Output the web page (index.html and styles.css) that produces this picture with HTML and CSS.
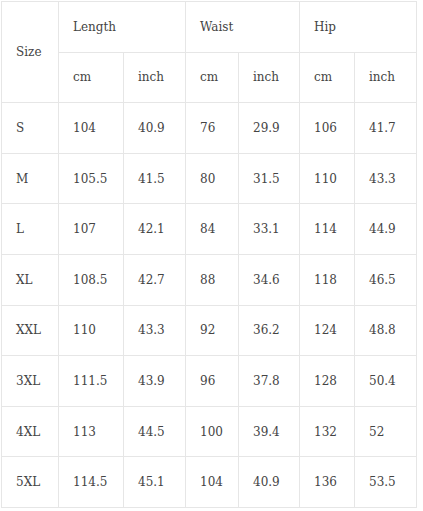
FILE: index.html
```html
<!DOCTYPE html>
<html>
<head>
<meta charset="utf-8">
<link rel="stylesheet" href="styles.css">
</head>
<body>
<table class="size-table">
  <colgroup>
    <col class="c1"><col class="c2"><col class="c3"><col class="c4"><col class="c5"><col class="c6"><col class="c7">
  </colgroup>
  <thead>
    <tr><td rowspan="2">Size</td><td colspan="2">Length</td><td colspan="2">Waist</td><td colspan="2">Hip</td></tr>
    <tr><td>cm</td><td>inch</td><td>cm</td><td>inch</td><td>cm</td><td>inch</td></tr>
  </thead>
  <tbody>
    <tr><td>S</td><td>104</td><td>40.9</td><td>76</td><td>29.9</td><td>106</td><td>41.7</td></tr>
    <tr><td>M</td><td>105.5</td><td>41.5</td><td>80</td><td>31.5</td><td>110</td><td>43.3</td></tr>
    <tr><td>L</td><td>107</td><td>42.1</td><td>84</td><td>33.1</td><td>114</td><td>44.9</td></tr>
    <tr><td>XL</td><td>108.5</td><td>42.7</td><td>88</td><td>34.6</td><td>118</td><td>46.5</td></tr>
    <tr><td>XXL</td><td>110</td><td>43.3</td><td>92</td><td>36.2</td><td>124</td><td>48.8</td></tr>
    <tr><td>3XL</td><td>111.5</td><td>43.9</td><td>96</td><td>37.8</td><td>128</td><td>50.4</td></tr>
    <tr><td>4XL</td><td>113</td><td>44.5</td><td>100</td><td>39.4</td><td>132</td><td>52</td></tr>
    <tr><td>5XL</td><td>114.5</td><td>45.1</td><td>104</td><td>40.9</td><td>136</td><td>53.5</td></tr>
  </tbody>
</table>
</body>
</html>
```
FILE: styles.css
```css
html, body {
  margin: 0;
  padding: 0;
  background: #ffffff;
}
body {
  padding: 1px 0 0 1px;
}
.size-table {
  border-collapse: collapse;
  table-layout: fixed;
  width: 415px;
  font-family: "DejaVu Serif", "Liberation Serif", serif;
  font-size: 12px;
  color: #444444;
}
.c1 { width: 57px; }
.c2 { width: 65px; }
.c3 { width: 62px; }
.c4 { width: 53px; }
.c5 { width: 61px; }
.c6 { width: 55px; }
.c7 { width: 62px; }
.size-table td {
  border: 1px solid #e6e6e6;
  height: 49.6px;
  padding: 0 0 0 14px;
  vertical-align: middle;
  text-align: left;
  white-space: nowrap;
}
```
